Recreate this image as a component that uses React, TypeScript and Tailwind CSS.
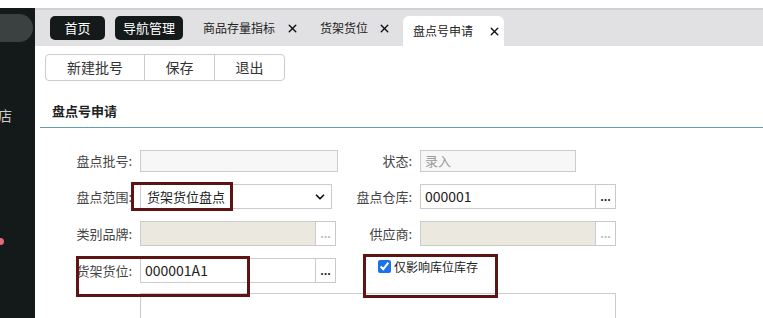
import { ChevronDown, X } from "lucide-react";

const font = { fontFamily: '"Noto Sans CJK SC", "Noto Sans", sans-serif' };

function Dots({ faint }: { faint?: boolean }) {
  return (
    <div
      className={`w-[20px] h-full border border-l-0 border-[#c9c9c9] bg-white flex items-center justify-center text-[11px] font-bold leading-none ${
        faint ? "text-[#bbb]" : "text-[#222]"
      }`}
    >
      ...
    </div>
  );
}

function Label({ text }: { text: string }) {
  return (
    <div className="text-right pr-[8px] text-[13px] text-[#444] whitespace-nowrap">
      {text}
    </div>
  );
}

export default function App() {
  return (
    <div
      className="w-[763px] h-[318px] overflow-hidden bg-white flex flex-col"
      style={font}
    >
      <div className="h-[8px] bg-white shrink-0" />
      <div className="flex flex-1 min-h-0">
        {/* sidebar */}
        <div className="w-[35px] bg-[#141a1a] shrink-0 relative">
          <div className="mt-[6px] h-[28px] w-[33px] rounded-r-[14px] bg-[#3b4040]" />
          <div className="absolute top-[97px] -left-[2px] text-[14px] text-[#ccc]">店</div>
          <div className="absolute top-[230px] -left-[3px] w-[7px] h-[7px] rounded-full bg-[#e06a78]" />
        </div>

        <div className="flex-1 flex flex-col relative">
          {/* tab bar */}
          <div className="h-[38px] bg-[#e1e1e3] border-t-2 border-[#d0d0d4] flex items-end pl-[15px] shrink-0">
            <div className="flex items-center h-full">
              <div className="h-[24px] w-[55px] justify-center rounded-[5px] bg-[#141a1a] text-white text-[13px] flex items-center">
                首页
              </div>
              <div className="ml-[10px] h-[24px] w-[68px] justify-center rounded-[5px] bg-[#141a1a] text-white text-[13px] flex items-center">
                导航管理
              </div>
              <div className="ml-[20px] flex items-center text-[12px] text-[#222]">
                商品存量指标
                <X size={13} strokeWidth={2.6} className="ml-[11px] text-[#111]" />
              </div>
              <div className="ml-[21px] flex items-center text-[12px] text-[#222]">
                货架货位
                <X size={13} strokeWidth={2.6} className="ml-[10px] text-[#111]" />
              </div>
            </div>
            <div className="ml-[12px] h-[30px] w-[101px] bg-white rounded-t-[6px] flex items-center pl-[10px] text-[12px] text-[#222]">
              盘点号申请
              <X size={13} strokeWidth={2.6} className="ml-[15px] text-[#111]" />
            </div>
          </div>

          {/* toolbar */}
          <div className="pl-[10px] pt-[8px] shrink-0">
            <div className="inline-flex h-[27px] border border-[#ccc] rounded-[4px] text-[14px] text-[#333]">
              <div className="w-[99px] flex items-center justify-center border-r border-[#ccc]">新建批号</div>
              <div className="w-[70px] flex items-center justify-center border-r border-[#ccc]">保存</div>
              <div className="w-[69px] flex items-center justify-center">退出</div>
            </div>
          </div>

          {/* section title */}
          <div className="ml-[5px] mt-[20px] h-[27px] border-b border-[#5f9fae] pl-[12px] text-[13px] font-bold text-[#222] flex items-start shrink-0">
            盘点号申请
          </div>

          {/* form */}
          <div className="ml-[5px] pt-[22px] grid grid-cols-[100px_198px_82px_196px] items-center gap-y-[12px] text-[13px]">
            <Label text="盘点批号:" />
            <div className="h-[22px] border border-[#ccc] bg-[#f7f7f7]" />
            <Label text="状态:" />
            <div className="h-[22px] w-[156px] border border-[#ccc] bg-[#f7f7f7] text-[#999] flex items-center pl-[4px]">
              录入
            </div>

            <Label text="盘点范围:" />
            <div className="h-[25px] w-[192px] border border-[#ccc] bg-white flex items-center justify-between pl-[6px] pr-[4px] text-[#222]">
              货架货位盘点
              <ChevronDown size={14} strokeWidth={3} className="text-[#111]" />
            </div>
            <Label text="盘点仓库:" />
            <div className="h-[25px] flex">
              <div className="w-[177px] border border-[#ccc] bg-white flex items-center pl-[4px] text-[14px] text-[#222]">
                000001
              </div>
              <Dots />
            </div>

            <Label text="类别品牌:" />
            <div className="h-[25px] flex">
              <div className="w-[176px] border border-[#ccc] bg-[#ebe8e0]" />
              <Dots faint />
            </div>
            <Label text="供应商:" />
            <div className="h-[25px] flex">
              <div className="w-[177px] border border-[#ccc] bg-[#ebe8e0]" />
              <Dots faint />
            </div>

            <Label text="货架货位:" />
            <div className="h-[25px] flex">
              <div className="w-[176px] border border-[#ccc] bg-white flex items-center pl-[4px] text-[14px] text-[#222]">
                000001A1
              </div>
              <Dots />
            </div>
            <div className="col-span-2 flex items-center pl-[40px] -mt-[8px] text-[12px] text-[#222]">
              <input type="checkbox" defaultChecked className="w-[13px] h-[13px] mr-[3px] accent-[#1a73e8]" />
              仅影响库位库存
            </div>

            <div />
            <div className="col-span-3 h-[40px] border border-[#ccc] -mt-[2px]" />
          </div>

          {/* annotation boxes */}
          <div className="absolute left-[96px] top-[174px] w-[102px] h-[29px] border-[3px] border-[#5e1414]" />
          <div className="absolute left-[41px] top-[248px] w-[174px] h-[41px] border-[3px] border-[#5e1414]" />
          <div className="absolute left-[328px] top-[246px] w-[135px] h-[44px] border-[3px] border-[#5e1414]" />
        </div>
      </div>
    </div>
  );
}
